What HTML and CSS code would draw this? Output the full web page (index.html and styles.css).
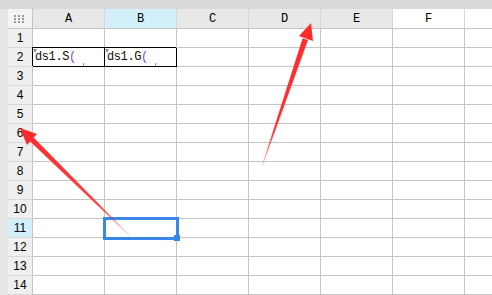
FILE: index.html
```html
<!DOCTYPE html>
<html lang="en">
<head>
    <link rel="stylesheet" href="styles.css">
</head>
<body>
    <div class="topbar"></div>
    <div class="sheet" id="sheet"></div>

    <svg class="arrows" width="492" height="295" viewBox="0 0 492 295">
        <defs>
            <linearGradient id="fade1" gradientUnits="userSpaceOnUse" x1="130" y1="236" x2="20" y2="128">
                <stop offset="0" stop-color="#ff2a2a" stop-opacity="0.2"/>
                <stop offset="0.3" stop-color="#ff2a2a" stop-opacity="0.9"/>
                <stop offset="1" stop-color="#ff2a2a"/>
            </linearGradient>
            <linearGradient id="fade2" gradientUnits="userSpaceOnUse" x1="262" y1="166" x2="311" y2="23">
                <stop offset="0" stop-color="#ff2a2a" stop-opacity="0.3"/>
                <stop offset="0.25" stop-color="#ff2a2a" stop-opacity="0.95"/>
                <stop offset="1" stop-color="#ff2a2a"/>
            </linearGradient>
        </defs>
        <polygon points="130.2,235.8 129.8,236.2 30.2,141.4 33.6,137.4" fill="url(#fade1)"/>
        <polygon points="20,128 37,134 27,145" fill="#ff2a2a"/>
        <polygon points="261.8,166 262.4,166.2 308,40 302.6,38.2" fill="url(#fade2)"/>
        <polygon points="311,23 313,41 299,36" fill="#ff2a2a"/>
    </svg>

    <script>
        let sheet = document.getElementById('sheet');
        let letters = ['A', 'B', 'C', 'D', 'E', 'F', ''];

        // header row
        let corner = document.createElement('div');
        corner.className = 'cell corner';
        corner.innerHTML = '<svg width="10" height="8" viewBox="0 0 10 8"><g fill="#9a9a9a">' +
            '<rect x="0" y="0" width="2" height="2"/><rect x="4" y="0" width="2" height="2"/><rect x="8" y="0" width="2" height="2"/>' +
            '<rect x="0" y="3" width="2" height="2"/><rect x="4" y="3" width="2" height="2"/><rect x="8" y="3" width="2" height="2"/>' +
            '<rect x="0" y="6" width="2" height="2"/><rect x="4" y="6" width="2" height="2"/><rect x="8" y="6" width="2" height="2"/>' +
            '</g></svg>';
        sheet.appendChild(corner);

        letters.forEach(function (letter) {
            let head = document.createElement('div');
            head.className = 'cell col-head';
            if (letter === 'B') head.className += ' active';
            if (letter === 'F' || letter === '') head.className += ' blank';
            head.textContent = letter;
            sheet.appendChild(head);
        });

        for (let r = 1; r <= 14; r++) {
            let rowHead = document.createElement('div');
            rowHead.className = 'cell row-head';
            if (r === 11) rowHead.className += ' active';
            rowHead.textContent = r;
            sheet.appendChild(rowHead);

            letters.forEach(function (letter) {
                let cell = document.createElement('div');
                cell.className = 'cell';
                if (r === 2 && letter === 'A') {
                    cell.className += ' boxed';
                    cell.innerHTML = '<span class="mark"></span>ds1.S<span class="paren">(</span><span class="tick"></span>';
                }
                if (r === 2 && letter === 'B') {
                    cell.className += ' boxed';
                    cell.innerHTML = '<span class="mark"></span>ds1.G<span class="paren">(</span><span class="tick"></span>';
                }
                if (r === 11 && letter === 'B') {
                    cell.innerHTML = '<div class="selection"><span class="handle"></span></div>';
                }
                sheet.appendChild(cell);
            });
        }
    </script>
</body>
</html>
```

FILE: styles.css
```css
body {
    margin: 0;
    padding: 0;
    width: 492px;
    height: 295px;
    overflow: hidden;
    background-color: #fff;
    font-family: "Liberation Sans", Arial, sans-serif;
    position: relative;
}

.topbar {
    height: 9px;
    background-color: #d9d9db;
}

.sheet {
    display: grid;
    grid-template-columns: 25px repeat(7, 72px);
    grid-template-rows: 20px;
    grid-auto-rows: 19px;
    padding-left: 8px;
    background-color: #e6e6e6;
    height: 286px;
    overflow: hidden;
}

.cell {
    box-sizing: border-box;
    border-right: 1px solid #c4c4c4;
    border-bottom: 1px solid #c4c4c4;
    background-color: #fff;
    position: relative;
    font-size: 12px;
    line-height: 18px;
    color: #000;
}

.corner {
    background-color: #f3f3f4;
    display: flex;
    align-items: center;
    justify-content: center;
    padding-right: 2px;
}

.col-head {
    background-color: #e8e8e8;
    border-right-color: #d6d6d6;
    text-align: center;
    font-family: "Liberation Mono", "DejaVu Sans Mono", monospace;
    font-size: 12px;
    line-height: 20px;
}

.col-head.active {
    background-color: #d2effa;
}

.col-head.blank {
    background-color: #fff;
}

.row-head {
    background-color: #efefef;
    border-right-color: #c4c4c4;
    border-bottom-color: #d8d8d8;
    text-align: center;
    font-size: 12px;
    line-height: 19px;
}

.row-head.active {
    background-color: #d2effa;
}

.boxed {
    border-right-color: #000;
    border-bottom-color: #000;
    box-shadow: -1px -1px 0 #000;
    font-family: "Liberation Mono", "DejaVu Sans Mono", monospace;
    font-size: 12px;
    line-height: 19px;
    padding-left: 2px;
    letter-spacing: -0.4px;
    color: #1a0a00;
}

.paren {
    color: #8a3ac8;
}

.mark {
    position: absolute;
    left: 0;
    top: 1px;
    width: 0;
    height: 0;
    border-left: 2px solid transparent;
    border-right: 2px solid transparent;
    border-top: 4px solid #8a8a8a;
}

.tick {
    position: absolute;
    left: 50px;
    bottom: 0;
    width: 1px;
    height: 3px;
    background-color: #9a9a9a;
}

.selection {
    position: absolute;
    z-index: 2;
    left: -2px;
    top: -2px;
    width: 76px;
    height: 23px;
    box-sizing: border-box;
    border: 3px solid #3a86ea;
}

.handle {
    position: absolute;
    right: -4px;
    bottom: -4px;
    width: 6px;
    height: 6px;
    background-color: #3a86ea;
}

.arrows {
    position: absolute;
    z-index: 3;
    left: 0;
    top: 0;
    pointer-events: none;
}
```
